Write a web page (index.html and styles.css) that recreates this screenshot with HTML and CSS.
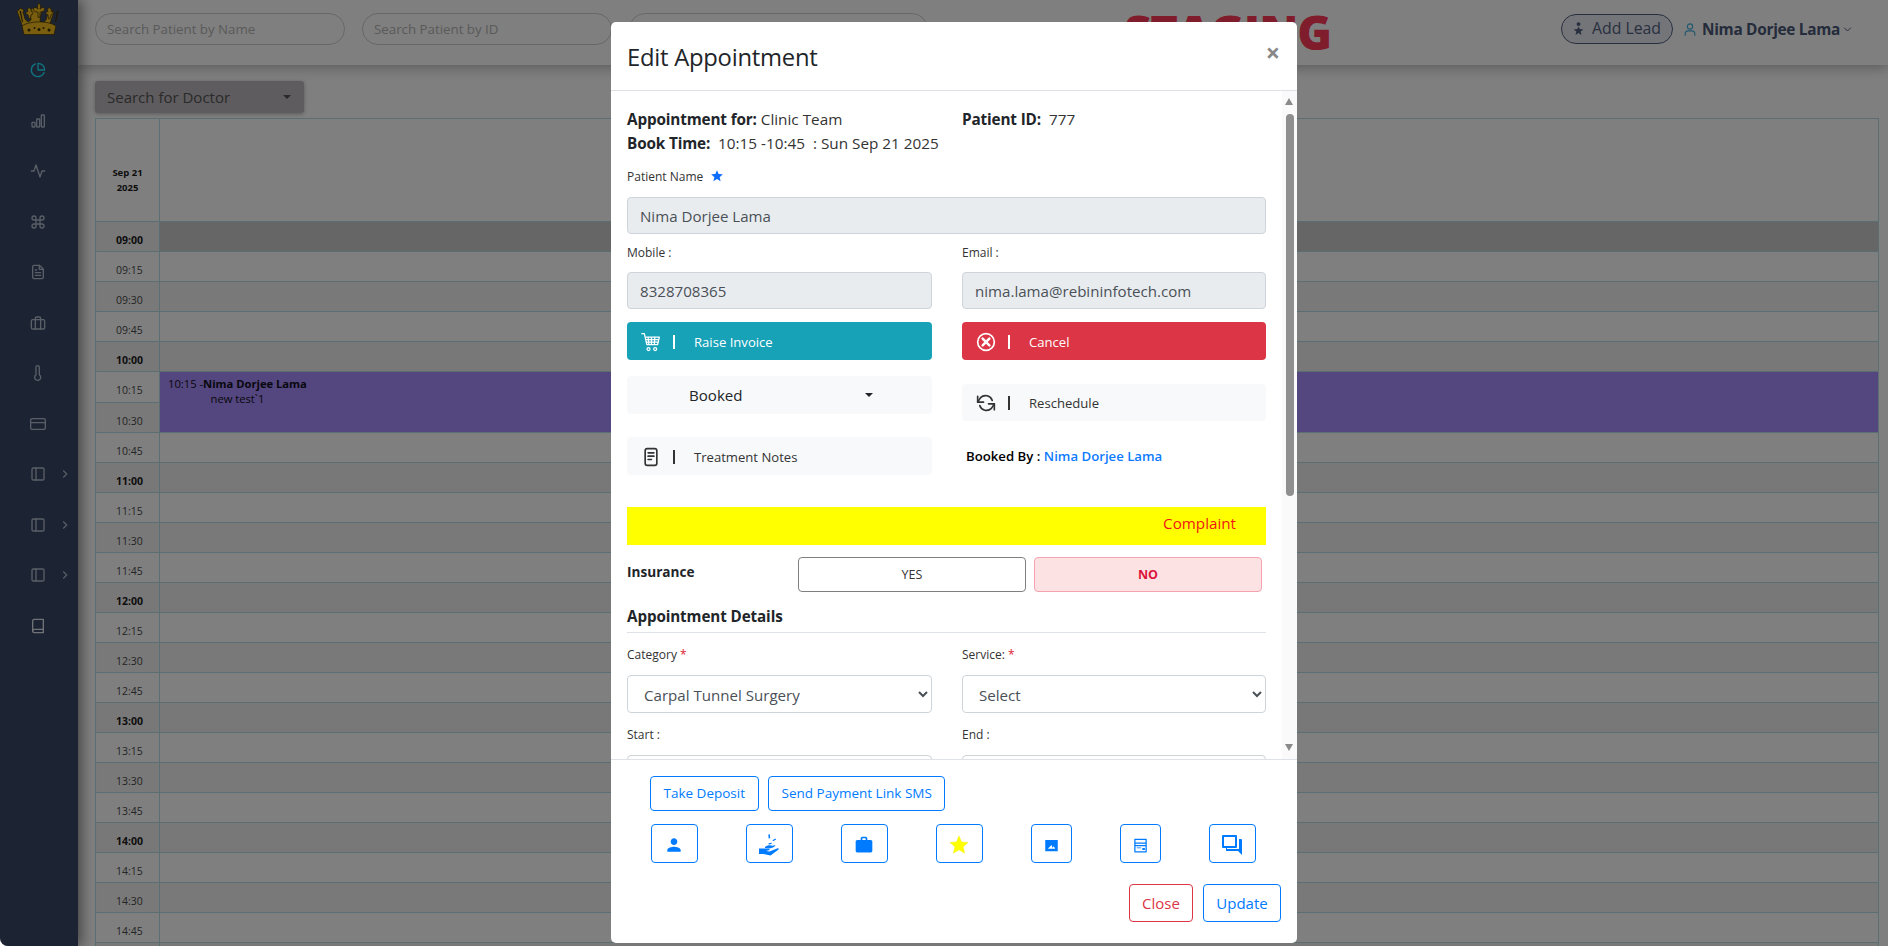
FILE: index.html
```html
<!DOCTYPE html>
<html lang="en">
<head>
<meta charset="utf-8">
<title>Edit Appointment</title>
<link rel="stylesheet" href="styles.css">
</head>
<body>
<div class="app">
  <aside class="sidebar">
    <svg class="logo" viewBox="0 0 46 33">
      <g fill="#f0bc1c" stroke="#3c2e06" stroke-width=".7">
        <path d="M7 26 1 9l2-1 1-2 2 1 2 1-1 2 2 7 3 3 3-2-1-7-1-2 2-1 1-2 2 1 2 2 1-1 2-1 1 2 2 1-1 2-1 7 3 2 3-3 2-7-1-2 2-1 2-1 1 2 2 1-6 17z"/>
        <path d="M23 1c-1.800 2-2 4-1 6l-2-1.500c-3-.5-3.500 3-1 4l3 .8v5h2v-5l3-.8c2.500-1 2-4.500-1-4L24 7c1-2 .8-4-1-6z"/>
        <path d="M13 5.500c-1.600 1.200-1.800 2.500-1 4l-1.700.3c-1 1.500 0 3 1.700 3l1 4h1.500l.5-4c1.700 0 2.700-1.500 1.700-3l-1.700-.3c.8-1.500 0-2.800-2-4zM33 5.500c-1.600 1.200-1.800 2.500-1 4l-1.700.3c-1 1.500 0 3 1.700 3l.5 4h1.500l1-4c1.700 0 2.700-1.500 1.700-3l-1.700-.3c.8-1.500.4-2.800-2-4z"/>
        <path d="M6 24c7-5.500 27-5.500 34 0l-2 8.500H8z"/>
      </g>
      <g fill="#3c2e06">
        <path d="M3.500 9h1.500l2 11H6zM41 9h1.500L40 20h-1z"/>
        <circle cx="13" cy="28" r="1.500"/><circle cx="18.500" cy="26" r="1"/><circle cx="23" cy="27.500" r="1.500"/><circle cx="27.500" cy="26" r="1"/><circle cx="33" cy="28" r="1.500"/>
      </g>
    </svg>
    <nav class="side-nav">
      <a class="side-item active"><svg class="ficon" viewBox="0 0 24 24"><path d="M21.200 15.900A10 10 0 1 1 8 2.800"/><path d="M22 12A10 10 0 0 0 12 2v10z"/></svg></a>
      <a class="side-item"><svg class="ficon" viewBox="0 0 24 24"><rect x="3" y="14" width="4.500" height="7" rx="1"/><rect x="10" y="9" width="4.500" height="12" rx="1"/><rect x="17" y="3" width="4.500" height="18" rx="1"/></svg></a>
      <a class="side-item"><svg class="ficon" viewBox="0 0 24 24"><path d="M22 12h-4l-3 9L9 3l-3 9H2"/></svg></a>
      <a class="side-item"><svg class="ficon" viewBox="0 0 24 24"><path d="M18 3a3 3 0 0 0-3 3v12a3 3 0 0 0 3 3 3 3 0 0 0 3-3 3 3 0 0 0-3-3H6a3 3 0 0 0-3 3 3 3 0 0 0 3 3 3 3 0 0 0 3-3V6a3 3 0 0 0-3-3 3 3 0 0 0-3 3 3 3 0 0 0 3 3h12a3 3 0 0 0 3-3 3 3 0 0 0-3-3z"/></svg></a>
      <a class="side-item"><svg class="ficon" viewBox="0 0 24 24"><path d="M14 2H6a2 2 0 0 0-2 2v16a2 2 0 0 0 2 2h12a2 2 0 0 0 2-2V8z"/><path d="M14 2v6h6M16 13H8M16 17H8M10 9H8"/></svg></a>
      <a class="side-item"><svg class="ficon" viewBox="0 0 24 24"><rect x="2" y="7" width="20" height="14" rx="2"/><path d="M16 21V5a2 2 0 0 0-2-2h-4a2 2 0 0 0-2 2v16"/></svg></a>
      <a class="side-item"><svg class="ficon" viewBox="0 0 24 24"><path d="M14 14.800V3.500a2.500 2.500 0 0 0-5 0v11.300a4.500 4.500 0 1 0 5 0z"/></svg></a>
      <a class="side-item"><svg class="ficon" viewBox="0 0 24 24"><rect x="1" y="4" width="22" height="16" rx="2"/><path d="M1 10h22"/></svg></a>
      <a class="side-item"><svg class="ficon" viewBox="0 0 24 24"><rect x="3" y="3" width="18" height="18" rx="2"/><path d="M9 3v18"/></svg><svg class="side-chevron" viewBox="0 0 24 24"><path d="m9 18 6-6-6-6"/></svg></a>
      <a class="side-item"><svg class="ficon" viewBox="0 0 24 24"><rect x="3" y="3" width="18" height="18" rx="2"/><path d="M9 3v18"/></svg><svg class="side-chevron" viewBox="0 0 24 24"><path d="m9 18 6-6-6-6"/></svg></a>
      <a class="side-item"><svg class="ficon" viewBox="0 0 24 24"><rect x="3" y="3" width="18" height="18" rx="2"/><path d="M9 3v18"/></svg><svg class="side-chevron" viewBox="0 0 24 24"><path d="m9 18 6-6-6-6"/></svg></a>
      <a class="side-item bright"><svg class="ficon" viewBox="0 0 24 24"><path d="M4 19.500A2.500 2.500 0 0 1 6.500 17H20"/><path d="M6.500 2H20v20H6.500A2.500 2.500 0 0 1 4 19.500v-15A2.500 2.500 0 0 1 6.500 2z"/></svg></a>
    </nav>
  </aside>

  <div class="main">
    <header class="topbar">
      <div class="search-pill w250">Search Patient by Name</div>
      <div class="search-pill w250">Search Patient by ID</div>
      <div class="search-pill w299"></div>
      <div class="staging">STAGING</div>
      <div class="top-right">
        <a class="lead-btn">
          <svg class="lead-icon" viewBox="0 0 16 16"><circle cx="8" cy="2.600" r="2.400"/><path d="M8 5.500l1.500 3.100 4.500.5-3.300 2.500 1 4.400L8 13.600l-3.700 2.400 1-4.400L2 9.100l4.500-.5z"/></svg>
          <span>Add Lead</span>
        </a>
        <svg class="user-icon" viewBox="0 0 16 16"><circle cx="8" cy="4.500" r="3"/><path d="M2.500 15v-2a3.500 3.500 0 0 1 3.500-3.500h4a3.500 3.500 0 0 1 3.500 3.500v2"/></svg>
        <span class="user-name">Nima Dorjee Lama</span>
        <svg class="user-chevron" viewBox="0 0 12 8"><path d="m1.500 1.500 4.500 4.500 4.500-4.500"/></svg>
      </div>
    </header>

    <section class="content">
      <div class="doctor-select"><span>Search for Doctor</span><i class="caret"></i></div>
      <div class="calendar">
        <div class="cal-row head"><div class="time-cell">Sep 21<br>2025</div><div class="slot-cell"></div></div>
        <div class="cal-row hour first"><div class="time-cell">09:00</div><div class="slot-cell"></div></div>
        <div class="cal-row"><div class="time-cell">09:15</div><div class="slot-cell"></div></div>
        <div class="cal-row alt"><div class="time-cell">09:30</div><div class="slot-cell"></div></div>
        <div class="cal-row"><div class="time-cell">09:45</div><div class="slot-cell"></div></div>
        <div class="cal-row hour"><div class="time-cell">10:00</div><div class="slot-cell"></div></div>
        <div class="cal-row tall"><div class="time-cell">10:15</div><div class="slot-cell event-start"><div class="event-text"><span>10:15 -<b>Nima Dorjee Lama</b></span><br>new test`1</div></div></div>
        <div class="cal-row alt"><div class="time-cell">10:30</div><div class="slot-cell event-end"></div></div>
        <div class="cal-row"><div class="time-cell">10:45</div><div class="slot-cell"></div></div>
        <div class="cal-row hour"><div class="time-cell">11:00</div><div class="slot-cell"></div></div>
        <div class="cal-row"><div class="time-cell">11:15</div><div class="slot-cell"></div></div>
        <div class="cal-row alt"><div class="time-cell">11:30</div><div class="slot-cell"></div></div>
        <div class="cal-row"><div class="time-cell">11:45</div><div class="slot-cell"></div></div>
        <div class="cal-row hour"><div class="time-cell">12:00</div><div class="slot-cell"></div></div>
        <div class="cal-row"><div class="time-cell">12:15</div><div class="slot-cell"></div></div>
        <div class="cal-row alt"><div class="time-cell">12:30</div><div class="slot-cell"></div></div>
        <div class="cal-row"><div class="time-cell">12:45</div><div class="slot-cell"></div></div>
        <div class="cal-row hour"><div class="time-cell">13:00</div><div class="slot-cell"></div></div>
        <div class="cal-row"><div class="time-cell">13:15</div><div class="slot-cell"></div></div>
        <div class="cal-row alt"><div class="time-cell">13:30</div><div class="slot-cell"></div></div>
        <div class="cal-row"><div class="time-cell">13:45</div><div class="slot-cell"></div></div>
        <div class="cal-row hour"><div class="time-cell">14:00</div><div class="slot-cell"></div></div>
        <div class="cal-row"><div class="time-cell">14:15</div><div class="slot-cell"></div></div>
        <div class="cal-row alt"><div class="time-cell">14:30</div><div class="slot-cell"></div></div>
        <div class="cal-row"><div class="time-cell">14:45</div><div class="slot-cell"></div></div>
        <div class="cal-row hour"><div class="time-cell"></div><div class="slot-cell"></div></div>
      </div>
    </section>
  </div>

  <div class="overlay">
    <div class="modal">
      <div class="modal-head">
        <h2>Edit Appointment</h2>
        <span class="modal-x">×</span>
      </div>
      <div class="modal-body">
        <div class="scroll-inner">
          <div class="two-col info">
            <div><b>Appointment for:</b> Clinic Team</div>
            <div><b>Patient ID:</b>&nbsp; 777</div>
          </div>
          <div class="info"><b>Book Time:</b>&nbsp; 10:15 -10:45 &nbsp;: Sun Sep 21 2025</div>

          <div class="label mt13">Patient Name <svg class="name-star" viewBox="0 0 24 24"><path d="M12 17.300 18.200 21l-1.600-7L22 9.200l-7.200-.6L12 2 9.200 8.600 2 9.200 7.500 14l-1.700 7z"/></svg></div>
          <div class="field disabled mt11">Nima Dorjee Lama</div>

          <div class="two-col mt10">
            <div class="label">Mobile :</div>
            <div class="label">Email :</div>
          </div>
          <div class="two-col mt10">
            <div class="field disabled">8328708365</div>
            <div class="field disabled">nima.lama@rebininfotech.com</div>
          </div>

          <div class="two-col mt13">
            <div class="stack">
              <a class="action teal">
                <svg class="act-icon" viewBox="0 0 24 24"><path d="M1 2h3l3 13h13l2-9H5M8.500 6l1 9M12.500 6v9M16.500 6l-.5 9M6 9h15M7 12h14"/><circle cx="9" cy="20.500" r="1.800"/><circle cx="17" cy="20.500" r="1.800"/></svg>
                <i class="sep"></i><span>Raise Invoice</span>
              </a>
              <div class="action light status"><span>Booked</span><i class="caret dark"></i></div>
              <a class="action light notes">
                <svg class="act-icon bold" viewBox="0 0 24 24"><rect x="5" y="2" width="14" height="20" rx="2.500"/><path d="M8.500 7h7M8.500 11h7M8.500 15h4"/></svg>
                <i class="sep"></i><span>Treatment Notes</span>
              </a>
            </div>
            <div class="stack">
              <a class="action red">
                <svg class="act-icon bold" viewBox="0 0 24 24"><circle cx="12" cy="12" r="10"/><path class="heavy" d="m8 8 8 8M16 8l-8 8"/></svg>
                <i class="sep"></i><span>Cancel</span>
              </a>
              <a class="action light reschedule">
                <svg class="act-icon bold" viewBox="0 0 24 24"><path d="M2 4v7h7M22 20v-7h-7"/><path d="M19.500 9A8.500 8.500 0 0 0 5.500 5.500L2 11M22 13l-3.500 5.500A8.500 8.500 0 0 1 4.500 15"/></svg>
                <i class="sep"></i><span>Reschedule</span>
              </a>
              <div class="booked-by"><b>Booked By :</b> <a>Nima Dorjee Lama</a></div>
            </div>
          </div>

          <div class="complaint">Complaint</div>

          <div class="insurance">
            <b>Insurance</b>
            <a class="choice yes">YES</a>
            <a class="choice no">NO</a>
          </div>

          <div class="section-title">Appointment Details</div>

          <div class="two-col mt13">
            <div class="label">Category <em>*</em></div>
            <div class="label">Service: <em>*</em></div>
          </div>
          <div class="two-col mt11">
            <select class="field pick"><option>Carpal Tunnel Surgery</option></select>
            <select class="field pick"><option>Select</option></select>
          </div>
          <div class="two-col mt13">
            <div class="label">Start :</div>
            <div class="label">End :</div>
          </div>
          <div class="two-col mt11">
            <div class="field plain"></div>
            <div class="field plain"></div>
          </div>
        </div>
        <div class="scrollbar">
          <i class="arrow up"></i>
          <i class="thumb"></i>
          <i class="arrow down"></i>
        </div>
      </div>
      <div class="modal-foot">
        <div class="foot-links">
          <a class="outline">Take Deposit</a>
          <a class="outline">Send Payment Link SMS</a>
        </div>
        <div class="foot-icons">
          <a class="icon-btn"><svg viewBox="0 0 24 24"><path d="M12 12c2.200 0 4-1.800 4-4s-1.800-4-4-4-4 1.800-4 4 1.800 4 4 4zm0 2c-2.700 0-8 1.300-8 4v2h16v-2c0-2.700-5.300-4-8-4z"/></svg></a>
          <a class="icon-btn"><svg class="large" viewBox="0 0 24 24"><path d="M2 15.500h4.500l5 .1c1.200 0 1.600 1.300.5 1.700l-3 .6 3.500.6 5-2.100 3-1.200c1.300-.3 1.700 1 .7 1.600l-7.700 5.700-7-1.500H2z"/><path d="M8 14c2-1.800 5-2.300 7.500-1.200l3-.7-1.500 1.900-3.200 1.300-2-.1-3.800-.2zM11.300 1.500l1.500-.2.400 4-1.500.2zM15.500 7.200l3-1.700.6 1-3 1.700zM11.500 10.300l3-.5.200 1.200-3 .5z"/></svg></a>
          <a class="icon-btn"><svg viewBox="0 0 24 24"><path d="M20 6h-4V4c0-1.100-.9-2-2-2h-4c-1.100 0-2 .9-2 2v2H4c-1.100 0-2 .9-2 2v11c0 1.100.9 2 2 2h16c1.100 0 2-.9 2-2V8c0-1.100-.9-2-2-2zm-6 0h-4V4h4v2z"/></svg></a>
          <a class="icon-btn"><svg class="yellow" viewBox="0 0 24 24"><path d="M12 17.300 18.200 21l-1.600-7L22 9.200l-7.200-.6L12 2 9.200 8.600 2 9.200 7.500 14l-1.700 7z"/></svg></a>
          <a class="icon-btn narrow"><svg class="small" viewBox="0 0 24 24"><path d="M2 3h20v18H2zM6 17h12l-2.500-4-2 2.500L12 11z" fill-rule="evenodd"/></svg></a>
          <a class="icon-btn narrow"><svg class="small" viewBox="0 0 24 24"><path fill-rule="evenodd" d="M3 1h18a1 1 0 0 1 1 1v20a1 1 0 0 1-1 1H3a1 1 0 0 1-1-1V2a1 1 0 0 1 1-1zm1 2v4h16V3zm0 6v2h16V9zm0 4v8h16v-8zm2 2h7v1.500H6zm9 1h4v3h-4z"/></svg></a>
          <a class="icon-btn"><svg class="large" viewBox="0 0 24 24"><path fill-rule="evenodd" d="M3 2h13a1 1 0 0 1 1 1v11a1 1 0 0 1-1 1H7v3H6v-3H3a1 1 0 0 1-1-1V3a1 1 0 0 1 1-1zm1 2v9h11V4zm15 2h2a1 1 0 0 1 1 1v15l-4-4H7v-2h12z"/></svg></a>
        </div>
        <div class="foot-actions">
          <a class="outline big danger">Close</a>
          <a class="outline big primary">Update</a>
        </div>
      </div>
    </div>
  </div>
</div>
</body>
</html>
```
FILE: styles.css
```css
* { box-sizing: border-box; }
html, body { height: 100%; }
body {
  margin: 0;
  background: #fff;
  font-family: "Open Sans", "Noto Sans", sans-serif;
  color: #212529;
  overflow: hidden;
}
a { text-decoration: none; }

.app {
  position: relative;
  display: flex;
  height: 946px;
  overflow: hidden;
  border-radius: 0 0 0 8px;
  background: #fff;
}

/* sidebar */
.sidebar {
  width: 78px;
  flex: none;
  background: #384666;
  box-shadow: 4px 0 12px rgba(0,0,0,.45);
  z-index: 2;
}
.logo { display: block; width: 46px; height: 33px; margin: 2px 0 0 16px; }
.side-nav { display: flex; flex-direction: column; margin-top: 10px; }
.side-item {
  position: relative;
  height: 50.500px;
  display: flex;
  align-items: center;
  padding-left: 30px;
  color: #b4bece;
}
.side-item.active { color: #1fe8ff; }
.side-item.bright { color: #dfe4ec; }
.ficon { width: 16px; height: 16px; fill: none; stroke: currentColor; stroke-width: 2; stroke-linecap: round; stroke-linejoin: round; }
.side-chevron { position: absolute; left: 58px; width: 14px; height: 14px; fill: none; stroke: #b4bece; stroke-width: 2; }

/* top bar */
.main { flex: 1; min-width: 0; display: flex; flex-direction: column; }
.topbar {
  height: 65px;
  flex: none;
  display: flex;
  padding: 13px 0 0 17px;
  gap: 17px;
  background: #fff;
  box-shadow: 0 3px 12px rgba(0,0,0,.28);
  position: relative;
  z-index: 1;
}
.search-pill {
  height: 32px;
  border: 1px solid #cfcfcf;
  border-radius: 16px;
  padding: 0 11px;
  font-size: 13.300px;
  line-height: 30px;
  color: #b4b4b4;
  white-space: nowrap;
}
.w250 { width: 250px; }
.w299 { width: 299px; }
.staging {
  margin: -12px 0 0 179px;
  width: 201px;
  font-size: 47px;
  line-height: 62px;
  font-weight: 800;
  color: #ff3a58;
  letter-spacing: -1px;
  white-space: nowrap;
}
.top-right { display: flex; align-items: flex-start; margin-left: 219px; }
.lead-btn {
  width: 112px;
  height: 30px;
  margin-top: 1px;
  border: 1px solid #50607e;
  border-radius: 15px;
  background: #e8eaf2;
  display: flex;
  align-items: center;
  padding: 0 0 2px 10px;
  gap: 7px;
  color: #50607e;
  font-size: 15.800px;
  white-space: nowrap;
}
.lead-icon { width: 13px; height: 15px; fill: #50607e; flex: none; }
.user-icon { width: 14px; height: 15px; margin: 9px 0 0 10px; fill: none; stroke: #3fb0e0; stroke-width: 1.300; }
.user-name { margin: 5px 0 0 5px; font-size: 15.400px; line-height: 24px; font-weight: 700; color: #4a5877; white-space: nowrap; letter-spacing: -.3px; }
.user-chevron { width: 9px; height: 7px; margin: 13px 0 0 3px; fill: none; stroke: #4a5877; stroke-width: 1.300; }

/* calendar */
.content { flex: 1; min-height: 0; padding: 16px 9px 0 17px; overflow: hidden; }
.doctor-select {
  width: 209px;
  height: 32px;
  border-radius: 3px;
  background: #bcb8bc;
  box-shadow: 0 1px 4px rgba(0,0,0,.3);
  display: flex;
  align-items: center;
  justify-content: space-between;
  padding: 0 13px 0 12px;
  font-size: 15px;
  color: #555;
}
.caret {
  width: 0; height: 0;
  border: 4px solid transparent;
  border-top: 4px solid #555;
  border-bottom: 0;
}
.caret.dark { border-top-color: #212529; }
.calendar { margin-top: 5px; border-top: 1px solid #b4dce8; border-left: 1px solid #b4dce8; border-right: 1px solid #b4dce8; }
.cal-row { display: flex; height: 30px; background: #fff; }
.cal-row.tall { height: 31px; }
.cal-row.alt { background: #f2f2f2; }
.cal-row.hour { background: #f0f0f0; }
.cal-row.head { height: 102.500px; }
.time-cell {
  width: 64px;
  flex: none;
  border-right: 1px solid #b4dce8;
  border-bottom: 1px solid #b4dce8;
  padding: 9px 0 0 20px;
  font-size: 10.500px;
  line-height: 18px;
  color: #4a4a4a;
}
.hour .time-cell { font-weight: 700; color: #1c1c1c; }
.head .time-cell {
  padding: 46px 0 0;
  text-align: center;
  font-size: 9.500px;
  line-height: 15px;
  font-weight: 700;
  color: #1c1c1c;
}
.slot-cell { flex: 1; border-bottom: 1px solid #b4dce8; }
.first .slot-cell { background: #cccccc; }
.first .time-cell { background: #f0f0f0; }
.event-start { background: #a88cfc; border-bottom: 0; }
.event-end { background: #a88cfc; }
.event-text {
  display: inline-block;
  margin: 4px 0 0 8px;
  text-align: center;
  font-size: 11.200px;
  line-height: 15px;
  color: #101020;
  white-space: nowrap;
}

/* modal */
.overlay {
  position: absolute;
  inset: 0;
  z-index: 10;
  background: rgba(0,0,0,.5);
  padding: 22px 0 0 611px;
}
.modal {
  width: 686px;
  height: 921px;
  background: #fff;
  border-radius: 5px;
  display: flex;
  flex-direction: column;
  overflow: hidden;
}
.modal-head {
  height: 69px;
  flex: none;
  border-bottom: 1px solid #dee2e6;
  position: relative;
  padding: 0 16px;
}
.modal-head h2 {
  display: inline-block;
  margin: 0;
  font-size: 23.800px;
  line-height: 70px;
  font-weight: 500;
  letter-spacing: -.25px;
  color: #212529;
}
.modal-x { position: absolute; right: 17px; top: 15px; font-size: 25px; line-height: 30px; font-weight: 700; color: #888; }

.modal-body {
  position: relative;
  flex: 1;
  min-height: 0;
  overflow: hidden;
  padding: 0 31px 0 16px;
  background: #fff;
}
.scrollbar {
  position: absolute;
  top: 0; right: 0; bottom: 0;
  width: 15px;
  background: #fafafa;
}
.thumb {
  position: absolute;
  top: 23px;
  left: 3.500px;
  width: 8px;
  height: 382px;
  border-radius: 4px;
  background: #8f8f8f;
}
.arrow {
  position: absolute;
  left: 3px;
  width: 0; height: 0;
  border: 4.500px solid transparent;
}
.arrow.up { top: 7px; border-top: 0; border-bottom: 7px solid #8a8a8a; }
.arrow.down { bottom: 8px; border-bottom: 0; border-top: 7px solid #8a8a8a; }
.scroll-inner { padding-top: 16px; }

.two-col { display: grid; grid-template-columns: 305px 304px; column-gap: 30px; }
.info { font-size: 15.300px; line-height: 24px; color: #333; }
.info b { color: #212529; font-weight: 700; letter-spacing: -.15px; }
.label { font-size: 12px; line-height: 18px; color: #333; }
.label em { font-style: normal; color: #e02030; }
.name-star { width: 14px; height: 14px; fill: #0d6efd; margin-left: 4px; vertical-align: -2px; }
.mt10 { margin-top: 10px; }
.mt11 { margin-top: 11px; }
.mt13 { margin-top: 13px; }

.field {
  display: block;
  width: 100%;
  height: 37px;
  border: 1px solid #ced4da;
  border-radius: 4px;
  padding: 0 12px;
  font-family: inherit;
  font-size: 15.100px;
  line-height: 37px;
  color: #495057;
  background: #fff;
}
.field.disabled { background: #e9ecef; }
.field.pick { height: 38px; padding: 2px 0 0 12px; color: #495057; }

.stack { display: flex; flex-direction: column; }
.action {
  height: 38px;
  border-radius: 4px;
  display: flex;
  align-items: center;
  padding: 1px 0 0 14px;
  font-size: 13.100px;
  white-space: nowrap;
}
.action.teal { background: #17a2b8; color: #fff; }
.action.red { background: #dc3545; color: #fff; }
.action.light { background: #f8f9fa; color: #333; }
.action.status { margin-top: 16px; padding: 0 0 1px 62px; font-size: 15.100px; color: #212529; justify-content: flex-start; }
.status .caret { margin-left: 122px; }
.action.notes { margin-top: 23px; }
.action.reschedule { margin-top: 24px; height: 37px; }
.act-icon { width: 20px; height: 20px; fill: none; stroke: currentColor; stroke-width: 1.500; stroke-linecap: round; stroke-linejoin: round; flex: none; }
.act-icon.bold { stroke-width: 2; }
.act-icon .heavy { stroke-width: 3; }
.sep { width: 2px; height: 14px; margin: 0 19px 0 12px; background: currentColor; flex: none; }
.booked-by { margin: 25px 0 0 4px; font-size: 13.200px; line-height: 20px; color: #000; white-space: nowrap; }
.booked-by b { font-weight: 600; }
.booked-by a { color: #0d7bff; font-weight: 600; }

.complaint {
  height: 38px;
  margin-top: 32px;
  background: #ff0;
  color: #f01515;
  font-size: 15.200px;
  line-height: 32px;
  text-align: right;
  padding-right: 30px;
}
.insurance { display: flex; align-items: flex-start; margin-top: 12px; gap: 8px; }
.insurance b { width: 163px; font-size: 13.600px; line-height: 30px; font-weight: 700; color: #212529; }
.choice { width: 228px; height: 35px; border-radius: 4px; text-align: center; font-size: 12.500px; line-height: 33px; }
.choice.yes { border: 1px solid #7f7f7f; color: #333; background: #fff; }
.choice.no { border: 1px solid #f5a3b0; background: #fde2e4; color: #dc143c; font-weight: 700; }
.section-title {
  margin-top: 14px;
  padding-bottom: 6px;
  border-bottom: 1px solid #dee2e6;
  font-size: 15.200px;
  line-height: 20px;
  font-weight: 700;
  color: #212529;
  letter-spacing: -.1px;
}

.modal-foot {
  height: 184px;
  flex: none;
  border-top: 1px solid #dee2e6;
  padding: 16px 16px 0 39px;
}
.foot-links { display: flex; gap: 9.500px; }
.outline {
  height: 35px;
  padding: 0 12.500px;
  border: 1px solid #007bff;
  border-radius: 4px;
  color: #007bff;
  font-size: 13.500px;
  line-height: 33px;
  white-space: nowrap;
}
.foot-icons { display: flex; gap: 47.500px; margin: 13px 0 0 .5px; }
.icon-btn {
  width: 47.500px;
  height: 39px;
  flex: none;
  border: 1px solid #007bff;
  border-radius: 4px;
  display: flex;
  align-items: center;
  justify-content: center;
  padding-top: 3px;
}
.icon-btn.narrow { width: 41.500px; }
.icon-btn svg { width: 20px; height: 20px; fill: #007bff; }
.icon-btn svg.large { width: 24px; height: 24px; }
.icon-btn svg.yellow { fill: #ff0; stroke: #e8e800; stroke-width: .4; width: 22px; height: 22px; }
.icon-btn svg.small { width: 15px; height: 15px; }
.foot-actions { display: flex; justify-content: flex-end; gap: 10px; margin-top: 21px; }
.outline.big { height: 38px; padding: 0; text-align: center; font-size: 15px; line-height: 36px; }
.outline.danger { width: 64px; border-color: #dc3545; color: #dc3545; }
.outline.primary { width: 78px; }
```
